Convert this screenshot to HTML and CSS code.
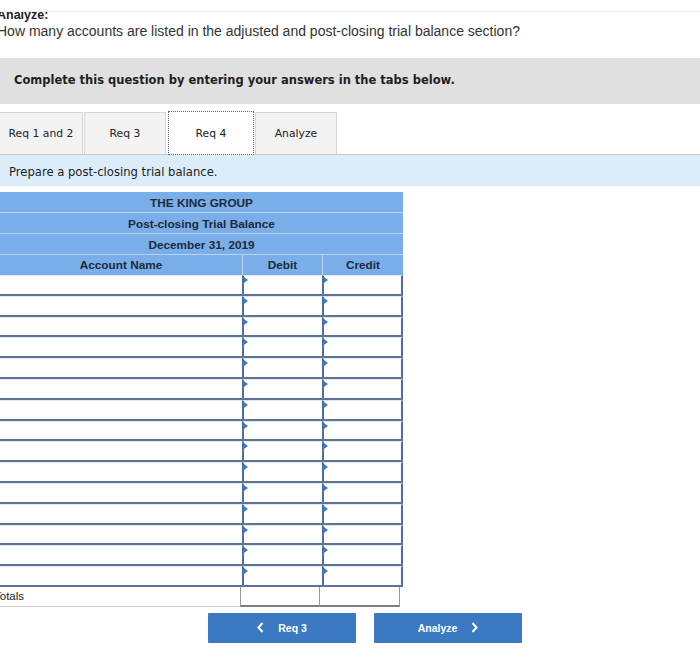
FILE: index.html
```html
<!DOCTYPE html>
<html>
<head>
<meta charset="utf-8">
<link rel="stylesheet" href="styles.css">
</head>
<body>
<div class="topbar"></div>
<div class="question">
  <div class="q-inner">
    <div class="q-title">Analyze:</div>
    <div class="q-text">How many accounts are listed in the adjusted and post-closing trial balance section?</div>
  </div>
</div>
<div class="instruct">Complete this question by entering your answers in the tabs below.</div>
<div class="tabs">
  <div class="tab">Req 1 and 2</div>
  <div class="tab">Req 3</div>
  <div class="tab active">Req 4</div>
  <div class="tab">Analyze</div>
</div>
<div class="prompt">Prepare a post-closing trial balance.</div>
<div class="tb">
  <div class="hrow">THE KING GROUP</div>
  <div class="hrow">Post-closing Trial Balance</div>
  <div class="hrow">December 31, 2019</div>
  <div class="hcols">
    <div class="hc name">Account Name</div>
    <div class="hc amt">Debit</div>
    <div class="hc amt">Credit</div>
  </div>
  <div class="rows" id="rows"></div>
  <div class="totals">
    <div class="tc name"><span class="tlabel">Totals</span></div>
    <div class="tc amt"></div>
    <div class="tc amt"></div>
  </div>
</div>
<div class="nav">
  <div class="btn prev"><svg class="chev" width="7" height="11" viewBox="0 0 7 11"><path d="M5.5 1 L1.5 5.5 L5.5 10" fill="none" stroke="#fff" stroke-width="2"/></svg><span>Req 3</span></div>
  <div class="btn next"><span>Analyze</span><svg class="chev" width="7" height="11" viewBox="0 0 7 11"><path d="M1.5 1 L5.5 5.5 L1.5 10" fill="none" stroke="#fff" stroke-width="2"/></svg></div>
</div>
<script>
var r = document.getElementById('rows');
for (var i = 0; i < 15; i++) {
  var d = document.createElement('div');
  d.className = 'drow';
  d.innerHTML = '<div class="dc name"></div><div class="dc amt"><i class="mark"></i></div><div class="dc amt last"><i class="mark"></i></div>';
  r.appendChild(d);
}
</script>
</body>
</html>
```
FILE: styles.css
```css
* { box-sizing: border-box; }
html, body { margin: 0; padding: 0; background: #fff; }
body { width: 700px; height: 649px; overflow: hidden; font-family: "Liberation Sans", Arial, sans-serif; color: #222; }

.topbar { height: 12px; border-bottom: 1px solid #ececec; background: #fff; }

.question { height: 46px; overflow: hidden; }
.q-inner { margin-top: -5px; margin-left: -3px; }
.q-title { font-weight: bold; font-size: 12.5px; line-height: 16px; color: #222; }
.q-text { font-size: 14px; line-height: 17px; color: #333; }

.instruct {
  height: 46px; background: #e0e0e0; padding-left: 14px;
  display: flex; align-items: center; padding-bottom: 2px;
  font-family: "DejaVu Sans", Verdana, sans-serif; font-weight: bold; font-size: 11.5px; color: #1e1e1e;
}

.tabs { margin-top: 8px; display: flex; align-items: flex-end; height: 43px; border-bottom: 1px solid #c8c8c8; }
.tab {
  height: 42px; width: 82px; margin-right: 1px;
  background: #f3f3f3; border: 1px solid #d6d6d6; border-bottom: none;
  display: flex; align-items: center; justify-content: center;
  font-family: "DejaVu Sans", Verdana, sans-serif; font-size: 10.8px; color: #222;
}
.tab:first-child { width: 83px; border-left: none; }
.tab.active { width: 86px; height: 44px; background: #fff; border: 1px dotted #3a66a8; margin-bottom: -1px; margin-left: 1px; }
.tab:last-child { width: 82px; }

.prompt {
  height: 31px; background: #dcedf9; padding-left: 9px;
  display: flex; align-items: center; padding-top: 3px;
  font-family: "DejaVu Sans", Verdana, sans-serif; font-size: 11.6px; color: #222;
}

.tb { margin-top: 6px; width: 403px; }
.hrow {
  height: 21px; background: #7aaee8; border-bottom: 1px solid #b9d2ef;
  display: flex; align-items: center; justify-content: center; padding-top: 1px;
  font-weight: bold; font-size: 11.8px; color: #1c2a3c;
}
.hcols { display: flex; height: 20px; background: #7aaee8; }
.hc { display: flex; align-items: center; justify-content: center; font-weight: bold; font-size: 11.8px; color: #1c2a3c; }
.hc.name { width: 242px; }
.hc.amt { width: 80px; border-left: 1px solid #b9d2ef; }
.hc.amt:last-child { width: 81px; }

.drow { display: flex; height: 20.8px; border-bottom: 2px solid #5d7495; background: #fff; }
.dc.name { width: 242px; border-top: 1px solid #e3e8ef; }
.dc.amt { width: 80px; border-left: 2px solid #4f6f9c; border-top: 1px solid #e3e8ef; position: relative; }
.dc.amt.last { width: 81px; border-right: 2px solid #4f6f9c; }
.mark { position: absolute; left: 0; top: 1px; width: 0; height: 0; border-top: 3px solid transparent; border-bottom: 3px solid transparent; border-left: 4px solid #3f7bc8; }

.totals { display: flex; height: 20px; }
.tc { display: flex; align-items: center; font-size: 11.5px; color: #222; }
.tc.name { width: 240px; border-bottom: 1px solid #cfcfcf; overflow: hidden; }
.tlabel { margin-left: -6px; }
.tc.amt { width: 80px; border: 1px solid #9a9a9a; border-bottom: 2px solid #7e7e7e; border-top: none; }
.tc.amt + .tc.amt { border-left: none; }

.nav { display: flex; padding-left: 208px; gap: 18px; margin-top: 6px; }
.btn {
  width: 148px; height: 30px; background: #3b79c3; color: #fff;
  display: flex; align-items: center; justify-content: center; gap: 14px;
  font-weight: bold; font-size: 10.5px; border-radius: 1px;
}
.chev { display: block; }
```
